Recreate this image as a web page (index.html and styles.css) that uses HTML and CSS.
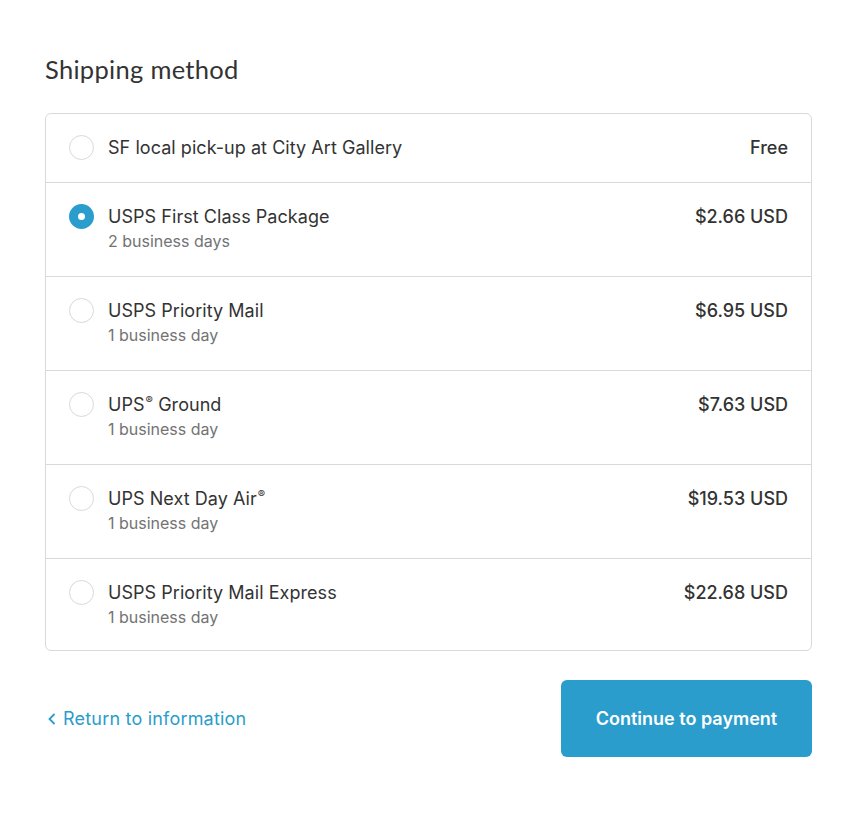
FILE: index.html
```html
<!DOCTYPE html>
<html>
<head>
<meta charset="utf-8">
<link rel="stylesheet" href="styles.css">
</head>
<body>
<main class="page">
  <h2 class="title">Shipping method</h2>
  <div class="box">
    <div class="row single">
      <span class="radio"></span>
      <div class="label"><div class="name">SF local pick-up at City Art Gallery</div></div>
      <div class="price">Free</div>
    </div>
    <div class="row">
      <span class="radio checked"></span>
      <div class="label"><div class="name">USPS First Class Package</div><div class="sub">2 business days</div></div>
      <div class="price">$2.66 USD</div>
    </div>
    <div class="row">
      <span class="radio"></span>
      <div class="label"><div class="name">USPS Priority Mail</div><div class="sub">1 business day</div></div>
      <div class="price">$6.95 USD</div>
    </div>
    <div class="row">
      <span class="radio"></span>
      <div class="label"><div class="name">UPS<sup>®</sup> Ground</div><div class="sub">1 business day</div></div>
      <div class="price">$7.63 USD</div>
    </div>
    <div class="row">
      <span class="radio"></span>
      <div class="label"><div class="name">UPS Next Day Air<sup>®</sup></div><div class="sub">1 business day</div></div>
      <div class="price">$19.53 USD</div>
    </div>
    <div class="row">
      <span class="radio"></span>
      <div class="label"><div class="name">USPS Priority Mail Express</div><div class="sub">1 business day</div></div>
      <div class="price">$22.68 USD</div>
    </div>
  </div>
  <div class="actions">
    <a class="back" href="#"><svg class="caret" width="10" height="14" viewBox="0 0 10 14"><path d="M7.5 2 L2.5 7 L7.5 12" fill="none" stroke="currentColor" stroke-width="1.8"/></svg>Return to information</a>
    <button class="btn">Continue to payment</button>
  </div>
</main>
</body>
</html>
```
FILE: styles.css
```css
* { box-sizing: border-box; }
body { margin: 0; background: #fff; font-family: Inter, "Liberation Sans", Arial, sans-serif; color: #333; }
.page { width: 767px; margin-left: 45px; padding-top: 53px; }
.title { font-family: Lato, "Open Sans", sans-serif; font-weight: 400; font-size: 25.5px; line-height: 32px; margin: 0 0 28px 0; color: #333; letter-spacing: 0.3px; }
.box { border: 1px solid #d9d9d9; border-radius: 6px; }
.row { display: flex; align-items: flex-start; padding: 22px 23px 23px 23px; border-top: 1px solid #d9d9d9; height: 94px; }
.row:first-child { border-top: none; height: 68px; }
.row:last-child { height: 92px; }
.radio { width: 25px; height: 25px; border: 1px solid #d9d9d9; border-radius: 50%; flex: none; margin-right: 14px; margin-top: -1px; background: #fff; }
.radio.checked { border: 9px solid #2a9dcc; background: #fff; }
.label { flex: 1; }
.name { font-size: 18px; line-height: 23px; color: #333; letter-spacing: 0.05px; }
.name sup { font-size: 11px; line-height: 0; vertical-align: 0; position: relative; top: -7px; margin-left: 1px; }
.sub { font-size: 16px; line-height: 26px; color: #737373; }
.price { font-size: 18px; line-height: 23px; font-weight: 550; color: #333; }
.actions { display: flex; justify-content: space-between; align-items: center; margin-top: 29px; }
.back { color: #2a9dcc; text-decoration: none; font-size: 18px; letter-spacing: 0.2px; display: flex; align-items: center; padding-left: 2px; }
.caret { margin-right: 6px; }
.btn { width: 251px; height: 77px; border: none; border-radius: 6px; background: #2a9dcc; color: #fff; font-family: Inter, "Liberation Sans", Arial, sans-serif; font-size: 18px; font-weight: 600; }
```
